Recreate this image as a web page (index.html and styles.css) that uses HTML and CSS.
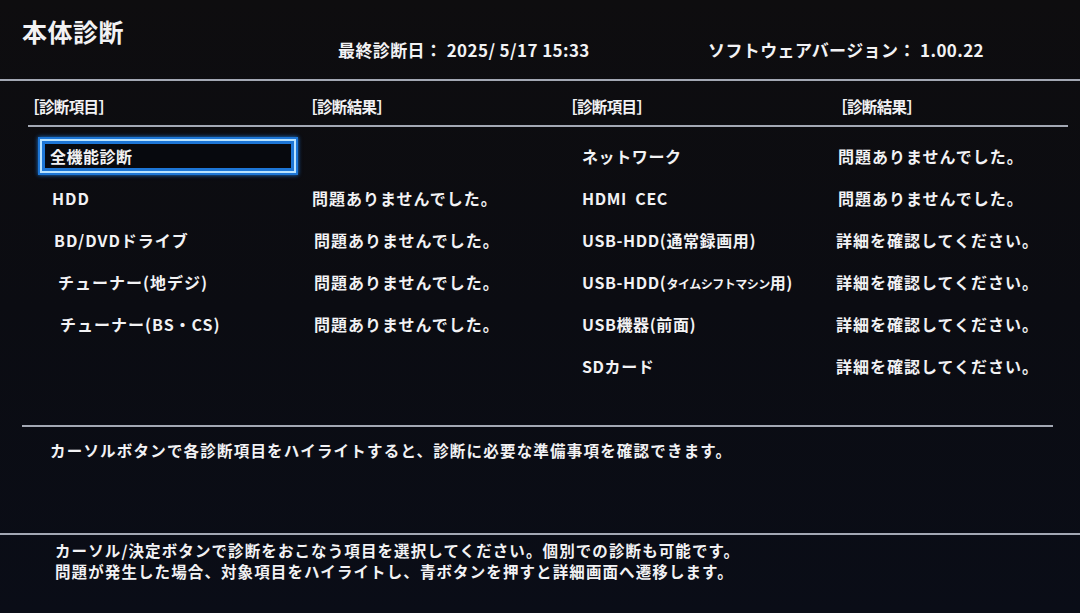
FILE: index.html
```html
<!DOCTYPE html>
<html lang="ja">
<head>
<meta charset="utf-8">
<link rel="stylesheet" href="styles.css">
</head>
<body>
<div class="screen">
  <header class="top">
    <div class="title">本体診断</div>
    <div class="date">最終診断日： 2025/ 5/17 15:33</div>
    <div class="ver">ソフトウェアバージョン： 1.00.22</div>
  </header>
  <section class="table">
    <div class="heads">
      <div class="h h1">［診断項目］</div>
      <div class="h h2">［診断結果］</div>
      <div class="h h3">［診断項目］</div>
      <div class="h h4">［診断結果］</div>
    </div>
    <div class="rows">
      <div class="row">
        <div class="c1"><span class="focus">全機能診断</span></div>
        <div class="c2"></div>
        <div class="c3">ネットワーク</div>
        <div class="c4">問題ありませんでした。</div>
      </div>
      <div class="row">
        <div class="c1 i1">HDD</div>
        <div class="c2">問題ありませんでした。</div>
        <div class="c3">HDMI&nbsp;&nbsp;CEC</div>
        <div class="c4">問題ありませんでした。</div>
      </div>
      <div class="row">
        <div class="c1 i2">BD/DVDドライブ</div>
        <div class="c2">問題ありませんでした。</div>
        <div class="c3">USB-HDD(通常録画用)</div>
        <div class="c4">詳細を確認してください。</div>
      </div>
      <div class="row">
        <div class="c1 i3">チューナー(地デジ)</div>
        <div class="c2">問題ありませんでした。</div>
        <div class="c3">USB-HDD(<span class="small">タイムシフトマシン</span>用)</div>
        <div class="c4">詳細を確認してください。</div>
      </div>
      <div class="row">
        <div class="c1 i4">チューナー(BS・CS)</div>
        <div class="c2">問題ありませんでした。</div>
        <div class="c3">USB機器(前面)</div>
        <div class="c4">詳細を確認してください。</div>
      </div>
      <div class="row">
        <div class="c1"></div>
        <div class="c2"></div>
        <div class="c3">SDカード</div>
        <div class="c4">詳細を確認してください。</div>
      </div>
    </div>
  </section>
  <section class="desc">
    <p>カーソルボタンで各診断項目をハイライトすると、診断に必要な準備事項を確認できます。</p>
  </section>
  <footer class="guide">
    <p>カーソル/決定ボタンで診断をおこなう項目を選択してください。個別での診断も可能です。</p>
    <p>問題が発生した場合、対象項目をハイライトし、青ボタンを押すと詳細画面へ遷移します。</p>
  </footer>
</div>
</body>
</html>
```

FILE: styles.css
```css
html, body {
  margin: 0;
  padding: 0;
  background: #0b0c11;
}
body {
  font-family: "Noto Sans CJK JP", "Noto Sans", sans-serif;
  font-weight: 700;
  color: #f2f2f4;
}
.screen {
  width: 1080px;
  height: 613px;
  overflow: hidden;
  background: linear-gradient(180deg, #0e0d0f 0%, #0b0c12 50%, #0a0d17 100%);
  display: flex;
  flex-direction: column;
}
.top {
  display: flex;
  align-items: flex-start;
  padding-left: 22px;
  border-bottom: 2px solid #a3a8b4;
  box-sizing: border-box;
  height: 81px;
}
.title {
  font-size: 25px;
  line-height: 30px;
  padding-top: 16px;
  width: 316px;
  letter-spacing: 0.5px;
}
.date, .ver {
  font-size: 17px;
  line-height: 22px;
  padding-top: 39px;
  letter-spacing: 0.4px;
}
.date { width: 370px; }
.table {
  margin-left: 28px;
  width: 1040px;
  height: 344px;
}
.heads {
  display: grid;
  grid-template-columns: 278px 262px 268px 1fr;
  height: 44px;
  border-bottom: 2px solid #a3a8b4;
  align-items: center;
  font-size: 15.5px;
  letter-spacing: -0.6px;
}
.h { padding-top: 6px; }
.h1 { margin-left: -4px; }
.h2 { margin-left: -4px; }
.h3 { margin-left: -6px; }
.h4 { margin-left: -4px; }
.rows {
  padding-top: 8px;
}
.row {
  display: grid;
  grid-template-columns: 278px 262px 268px 1fr;
  height: 42px;
  align-items: center;
  font-size: 16px;
  letter-spacing: 1px;
  white-space: nowrap;
}
.c1 { padding-left: 22px; }
.i1 { padding-left: 24px; }
.i2 { padding-left: 26px; }
.i3 { padding-left: 30px; }
.i4 { padding-left: 32px; }
.c2 { padding-left: 6px; }
.c3 { padding-left: 14px; letter-spacing: 0.6px; }
.c4 { padding-left: 2px; }
.row:nth-child(n+3) .c2 { padding-left: 8px; }
.row:nth-child(n+3) .c4 { padding-left: 0; }
.small { font-size: 12px; letter-spacing: -0.5px; }
.row .c1:has(.focus) { padding-left: 10px; }
.focus {
  display: flex;
  align-items: center;
  width: 260px;
  height: 38px;
  box-sizing: border-box;
  padding-left: 10px;
  letter-spacing: 0.5px;
  border: 2px solid #1d76d6;
  box-shadow: inset 0 0 0 2px #b9e3ff, inset 0 0 0 5px #1d76d6, 0 0 4px #1d76d6;
  background: #07090e;
}
.desc {
  margin-left: 22px;
  width: 1031px;
  height: 106px;
  border-top: 2px solid #a3a8b4;
  font-size: 15.5px;
  letter-spacing: 1.2px;
}
.desc p {
  margin: 12px 0 0 28px;
}
.guide {
  border-top: 2px solid #a3a8b4;
  font-size: 15.5px;
  line-height: 21px;
  letter-spacing: 1.1px;
  padding: 5px 0 0 55px;
}
.guide p { margin: 0; }
```
